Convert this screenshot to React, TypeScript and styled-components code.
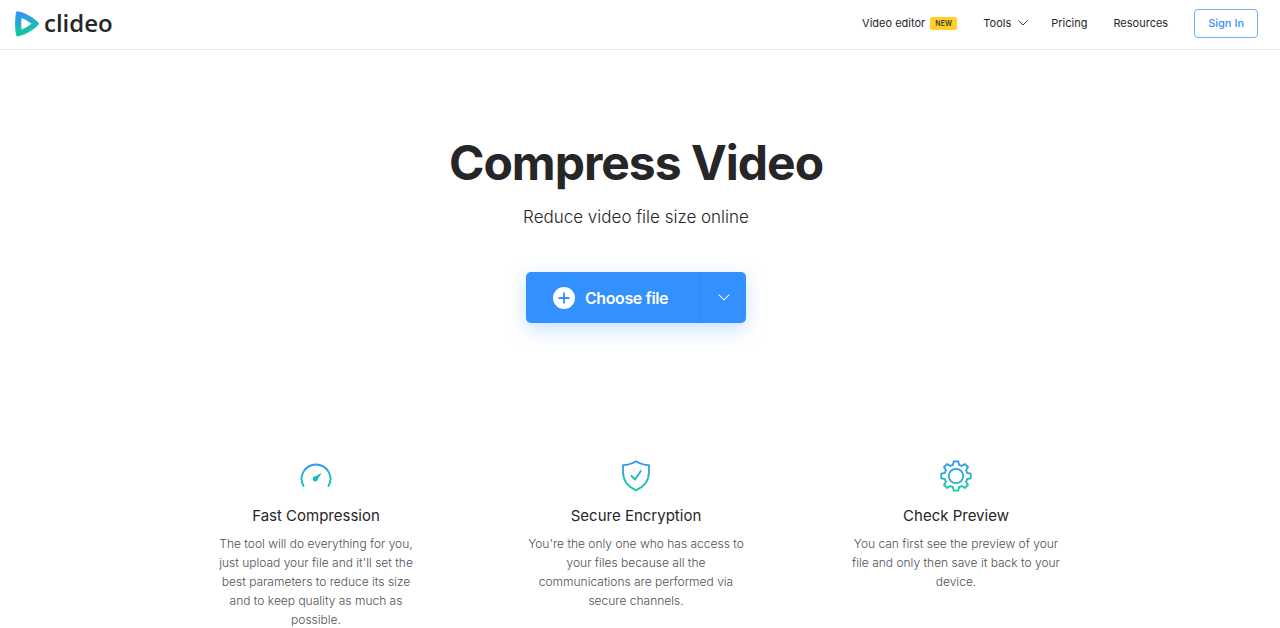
import React from "react";
import styled, { createGlobalStyle } from "styled-components";

const GlobalStyle = createGlobalStyle`
  *, *::before, *::after { box-sizing: border-box; }
  body {
    margin: 0;
    background: #fff;
    color: #262628;
    font-family: Inter, "Liberation Sans", sans-serif;
  }
  h1, h2, p, ul { margin: 0; padding: 0; }
  button { font: inherit; cursor: pointer; }
`;

const Header = styled.header`
  display: flex;
  align-items: center;
  justify-content: space-between;
  height: 50px;
  padding: 0 22px 3px 14px;
  border-bottom: 1px solid #e9e9ea;
`;

const Logo = styled.a`
  display: flex;
  align-items: center;
  gap: 4px;
  color: #262628;
  font-family: "Open Sans", "Liberation Sans", sans-serif;
  font-size: 24px;
  font-weight: 600;
  line-height: 28px;
  text-decoration: none;
`;

const Nav = styled.nav`
  display: flex;
  align-items: center;
  gap: 26px;
`;

const NavLink = styled.a`
  display: flex;
  align-items: center;
  gap: 5px;
  color: #262628;
  font-size: 11px;
  font-weight: 400;
  line-height: 16px;
  text-decoration: none;
`;

const NavButton = styled.button`
  display: flex;
  align-items: center;
  gap: 7px;
  margin-right: -3px;
  padding: 0;
  border: 0;
  background: none;
  color: #262628;
  font-size: 11px;
  font-weight: 400;
  line-height: 16px;
`;

const Badge = styled.span`
  padding: 0 5px;
  border-radius: 2px;
  background: #ffd02b;
  font-size: 7px;
  font-weight: 500;
  line-height: 13px;
  letter-spacing: 0.2px;
`;

const SignIn = styled.a`
  padding: 6px 13px;
  border: 1px solid #6cafff;
  border-radius: 4px;
  color: #3291ff;
  font-size: 11px;
  font-weight: 500;
  line-height: 15px;
  text-decoration: none;
`;

const Main = styled.main`
  padding-right: 8px;
`;

const Hero = styled.section`
  display: flex;
  flex-direction: column;
  align-items: center;
  padding: 84px 16px 137px;
  text-align: center;
`;

const Title = styled.h1`
  font-size: 48px;
  font-weight: 700;
  line-height: 58px;
  letter-spacing: -1px;
`;

const Subtitle = styled.p`
  margin-top: 13px;
  font-size: 17px;
  font-weight: 300;
  line-height: 24px;
`;

const SplitButton = styled.div`
  display: flex;
  margin-top: 43px;
  border-radius: 5px;
  background: #3291ff;
  box-shadow: 0 6px 20px rgba(50, 145, 255, 0.28);
`;

const ChooseButton = styled.button`
  display: flex;
  align-items: center;
  gap: 10px;
  height: 51px;
  padding: 0 32px 0 27px;
  border: 0;
  background: none;
  color: #fff;
  font-size: 16px;
  font-weight: 600;
  letter-spacing: -0.4px;
`;

const SourceButton = styled.button`
  display: flex;
  align-items: center;
  justify-content: center;
  width: 46px;
  padding: 0;
  border: 0;
  border-left: 1px solid #2e88f0;
  background: none;
  color: #fff;
`;

const Features = styled.ul`
  display: grid;
  grid-template-columns: repeat(3, 1fr);
  max-width: 960px;
  margin: 0 auto;
  list-style: none;
`;

const Feature = styled.li`
  display: flex;
  flex-direction: column;
  align-items: center;
  padding: 0 52px;
  text-align: center;
`;

const FeatureTitle = styled.h2`
  margin-top: 14px;
  font-size: 15px;
  font-weight: 400;
  line-height: 20px;
`;

const FeatureText = styled.p`
  margin-top: 8px;
  color: #505054;
  font-size: 12px;
  font-weight: 300;
  line-height: 19px;
`;

function Gradient({ id }: { id: string }) {
  return (
    <defs>
      <linearGradient id={id} gradientUnits="userSpaceOnUse" x1="16" y1="0" x2="16" y2="32">
        <stop offset="0" stopColor="#3291ff" />
        <stop offset="1" stopColor="#10d098" />
      </linearGradient>
    </defs>
  );
}

function LogoMark() {
  return (
    <svg width="26" height="28" viewBox="0 -1 26 28" aria-hidden="true">
      <defs>
        <linearGradient id="logo" x1="0.4" y1="0" x2="0.5" y2="1">
          <stop offset="0.1" stopColor="#3396f2" />
          <stop offset="0.9" stopColor="#0fcb9d" />
        </linearGradient>
      </defs>
      <path
        fill="url(#logo)"
        fillRule="evenodd"
        d="M3.8 1.2C11 2.6 18.5 6.600 24.400 12.500Q25.600 13.800 24.400 15.100C18.500 21 11 25 3.800 26.400Q2.300 26.500 2 25C.8 18 .8 9.500 2 2.500Q2.300 1.100 3.800 1.200ZM7.600 8.100Q6.800 14 7.600 19.500Q13 17.500 17.500 13.800Q13 10 7.600 8.100Z"
      />
    </svg>
  );
}

function Chevron({ width = 10 }: { width?: number }) {
  return (
    <svg width={width} height={width / 2 + 1} viewBox="0 0 10 6" fill="none" stroke="currentColor" strokeLinecap="round" strokeLinejoin="round" strokeWidth="0.9" aria-hidden="true">
      <path d="M.7.8 5 5 9.300.8" />
    </svg>
  );
}

function PlusIcon() {
  return (
    <svg width="22" height="22" viewBox="0 0 22 22" aria-hidden="true">
      <circle cx="11" cy="11" r="11" fill="#fff" />
      <path d="M11 5.500v11M5.500 11h11" stroke="#3291ff" strokeWidth="1.800" />
    </svg>
  );
}

function GaugeIcon() {
  return (
    <svg width="32" height="32" viewBox="0 0 32 32" fill="none" aria-hidden="true">
      <Gradient id="gauge" />
      <path d="M3.500 26A14.400 14.400 0 1 1 28.500 26" stroke="url(#gauge)" strokeWidth="1.900" strokeLinecap="round" />
      <path d="M21.800 12.800 17.900 19A2.600 2.600 0 1 1 15.500 16.200Z" fill="#1fb8bd" />
    </svg>
  );
}

function ShieldIcon() {
  return (
    <svg width="32" height="32" viewBox="0 0 32 32" fill="none" stroke="url(#shield)" strokeWidth="1.800" strokeLinecap="round" strokeLinejoin="round" aria-hidden="true">
      <Gradient id="shield" />
      <path d="M16 1.300C12 3.800 7.500 5 3 5.200V12C3.200 20 7 26.500 16 30.300C25 26.500 28.800 20 29 12V5.200C24.500 5 20 3.800 16 1.300Z" />
      <path d="M11.500 16 15 19.500 20.800 11" />
    </svg>
  );
}

const toothPoints: [number, number][] = [[-15, 11.600], [-9, 14.900], [9, 14.900], [15, 11.600]];

const gearPath =
  Array.from({ length: 8 }, (_, tooth) => {
    const points = toothPoints.map(([offset, radius]) => {
      const angle = ((tooth * 45 + offset - 90) * Math.PI) / 180;
      return `${(16 + radius * Math.cos(angle)).toFixed(2)} ${(16 + radius * Math.sin(angle)).toFixed(2)}`;
    });
    return `${tooth === 0 ? "M" : "L"}${points.join("L")}`;
  }).join("") + "Z";

function GearIcon() {
  return (
    <svg width="32" height="32" viewBox="0 0 32 32" fill="none" stroke="url(#gear)" strokeWidth="1.800" strokeLinejoin="round" aria-hidden="true">
      <Gradient id="gear" />
      <path d={gearPath} />
      <circle cx="16" cy="16" r="7.200" />
    </svg>
  );
}

const features = [
  {
    icon: <GaugeIcon />,
    title: "Fast Compression",
    text: "The tool will do everything for you, just upload your file and it'll set the best parameters to reduce its size and\u00a0to keep quality as much as possible.",
  },
  {
    icon: <ShieldIcon />,
    title: "Secure Encryption",
    text: "You're the only one who has access to your files because all the communications are performed via secure channels.",
  },
  {
    icon: <GearIcon />,
    title: "Check Preview",
    text: "You can first see the preview of your file and only then save it back to your device.",
  },
];

export default function App() {
  return (
    <>
      <GlobalStyle />
      <Header>
        <Logo href="#">
          <LogoMark />
          clideo
        </Logo>
        <Nav>
          <NavLink href="#editor">
            Video editor <Badge>NEW</Badge>
          </NavLink>
          <NavButton type="button">
            Tools <Chevron />
          </NavButton>
          <NavLink href="#pricing">Pricing</NavLink>
          <NavLink href="#resources">Resources</NavLink>
          <SignIn href="#signin">Sign In</SignIn>
        </Nav>
      </Header>
      <Main>
        <Hero>
          <Title>Compress Video</Title>
          <Subtitle>Reduce video file size online</Subtitle>
          <SplitButton>
            <ChooseButton type="button">
              <PlusIcon />
              Choose file
            </ChooseButton>
            <SourceButton type="button" aria-label="More sources">
              <Chevron width={12} />
            </SourceButton>
          </SplitButton>
        </Hero>
        <Features>
          {features.map((feature) => (
            <Feature key={feature.title}>
              {feature.icon}
              <FeatureTitle>{feature.title}</FeatureTitle>
              <FeatureText>{feature.text}</FeatureText>
            </Feature>
          ))}
        </Features>
      </Main>
    </>
  );
}
